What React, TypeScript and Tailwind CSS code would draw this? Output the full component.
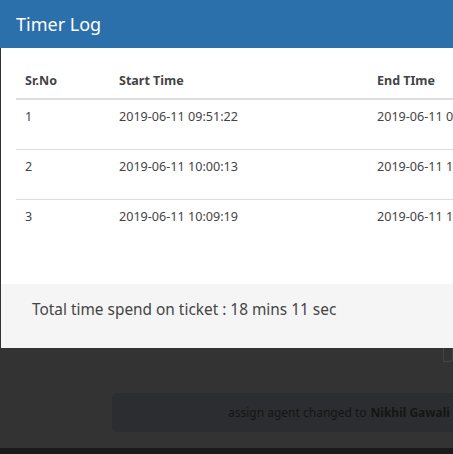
import React from "react";

const rows = [
  { n: "1", s: "2019-06-11 09:51:22", e: "2019-06-11 09:55:10" },
  { n: "2", s: "2019-06-11 10:00:13", e: "2019-06-11 10:05:40" },
  { n: "3", s: "2019-06-11 10:09:19", e: "2019-06-11 10:15:30" },
];

export default function App() {
  return (
    <div
      className="w-[453px] h-[454px] overflow-hidden bg-[#333333] flex flex-col"
      style={{ fontFamily: '"Noto Sans", "Open Sans", sans-serif' }}
    >
      <div className="h-[348px] shrink-0 flex flex-col w-[600px]">
        <div className="h-[48px] bg-[#2b70aa] flex items-center pl-4">
          <span className="text-white text-[18px] leading-none">Timer Log</span>
        </div>
        <div className="flex-1 bg-white border-l border-[#333333] pl-[15px] pt-[17px]">
          <div className="h-[35px] flex items-center text-[12.5px] font-bold text-[#444] border-b-2 border-[#dddddd]">
            <div className="w-[103px] pl-[9px]">Sr.No</div>
            <div className="w-[258px]">Start Time</div>
            <div>End TIme</div>
          </div>
          {rows.map((r, i) => (
            <div
              key={r.n}
              className={`h-[50px] flex items-center text-[12.6px] text-[#444] whitespace-nowrap ${i < 2 ? "border-b border-[#dddddd]" : ""}`}
            >
              <div className="w-[103px] pl-[9px] -mt-[15px]">{r.n}</div>
              <div className="w-[258px] -mt-[15px]">{r.s}</div>
              <div className="-mt-[15px]">{r.e}</div>
            </div>
          ))}
        </div>
        <div className="h-[64px] bg-[#f5f5f5] border-l border-[#333333] pl-[31px] pt-[13px]">
          <span className="text-[15.4px] leading-[22px] text-[#444]">Total time spend on ticket : 18 mins 11 sec</span>
        </div>
      </div>
      <div className="relative flex-1 flex flex-col">
        <div className="absolute right-0 top-0 w-[10px] h-[14px] border border-[#444] rounded-br-[4px] border-t-0" />
        <div className="h-[45px]" />
        <div className="ml-[112px] w-[400px] h-[39px] bg-[#2b2d30] rounded-[5px] flex items-center pl-[116px] text-[12px] text-[#151515] whitespace-nowrap">
          assign agent changed to <b className="ml-1">Nikhil Gawali</b>
        </div>
        <div className="flex-1" />
        <div className="h-[6px] bg-[#1a1a1a]" />
      </div>
    </div>
  );
}
